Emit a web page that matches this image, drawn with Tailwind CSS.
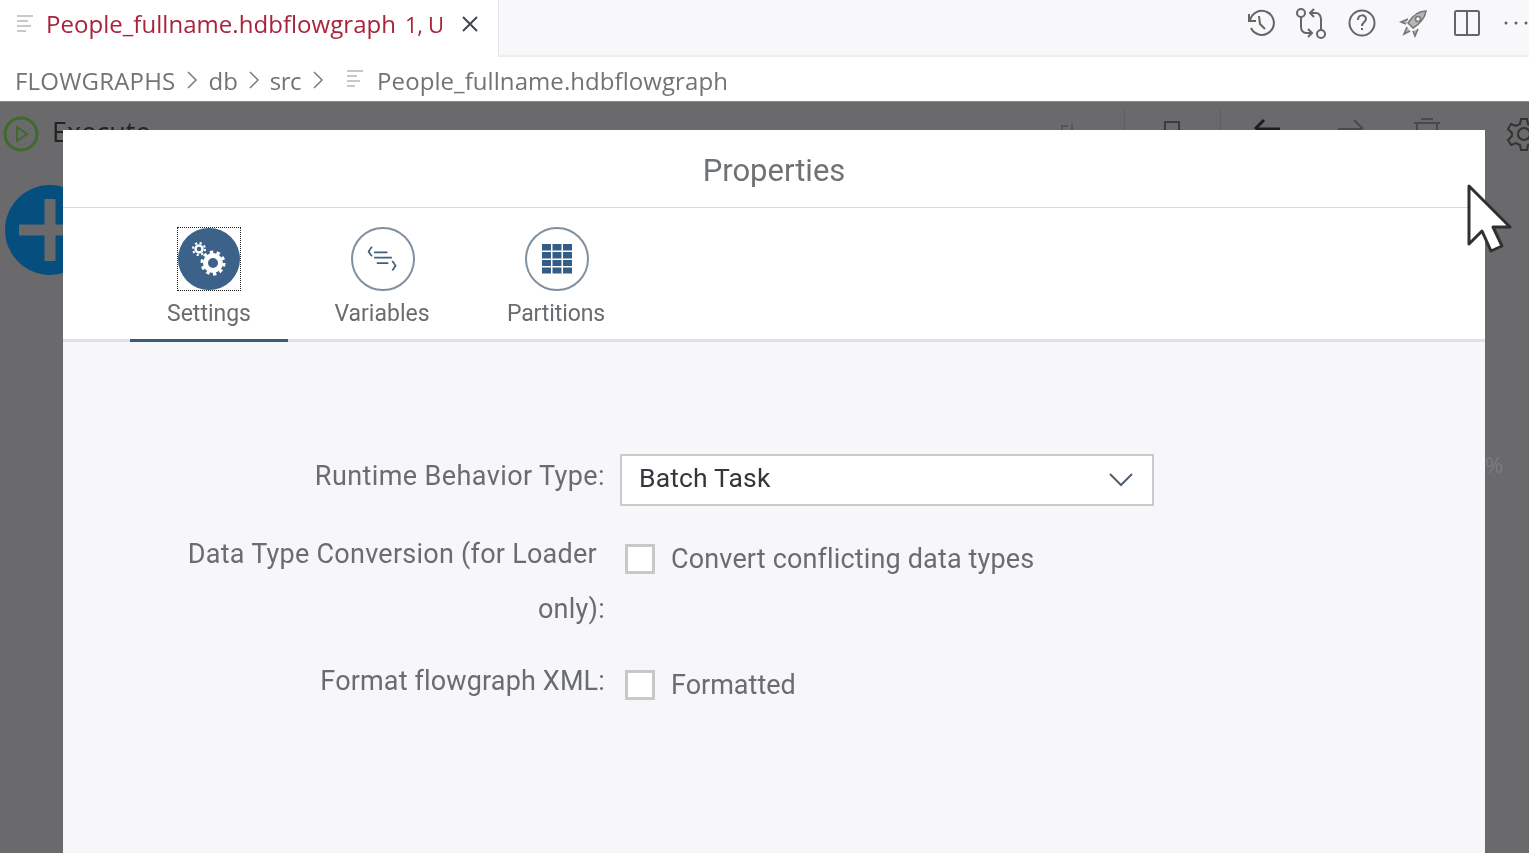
<!DOCTYPE html>
<html>
<head>
<meta charset="utf-8">
<script src="https://cdn.jsdelivr.net/npm/@tailwindcss/browser@4"></script>
</head>
<body class="m-0 overflow-hidden bg-[#6a696b]">
<div class="relative w-[1529px] h-[853px] overflow-hidden flex flex-col font-['Open_Sans',sans-serif] blur-[0.4px]">
  <!-- tab bar -->
  <div class="h-[57px] shrink-0 flex bg-[#f8f7fa] border-b-2 border-[#eeedf0]">
    <div class="w-[499px] h-[57px] bg-white flex items-center border-r border-[#e6e6e9] pb-[10px]">
      <svg class="ml-[16px] w-[18px] h-[20px]" viewBox="0 0 18 20" fill="none" stroke="#c8c8c8" stroke-width="2"><path d="M1 2h16M1 7h11M1 12h14M1 17h9"/></svg>
      <span class="ml-[12px] text-[24px] leading-none text-[#a8243c] tracking-[0.04px] whitespace-nowrap">People_fullname.hdbflowgraph</span>
      <span class="ml-[9px] text-[22px] leading-none text-[#a8243c] whitespace-nowrap tracking-[-0.3px]">1, U</span>
      <svg class="ml-[17px] w-[18px] h-[18px]" viewBox="0 0 18 18" fill="none" stroke="#3d4852" stroke-width="2"><path d="M2 2l14 14M16 2L2 16"/></svg>
    </div>
    <div class="flex-1 relative">
      <svg class="absolute left-[746px] top-[8px] w-[30px] h-[30px]" viewBox="0 0 30 30" fill="none" stroke="#666" stroke-width="2"><path d="M4 6v7h7"/><path d="M5 13a12 12 0 1 1 1 7"/><path d="M14 8l1 8 5 5"/></svg>
      <svg class="absolute left-[797px] top-[8px] w-[30px] h-[32px]" viewBox="0 0 30 32" fill="none" stroke="#666" stroke-width="2"><circle cx="5" cy="5" r="4"/><circle cx="25" cy="26" r="4"/><path d="M5 9v10c0 3 2 6 5 6h5M12 21l4 4-4 4"/><path d="M25 22V11c0-3-2-6-5-6h-5M18 1l-4 4 4 4"/></svg>
      <svg class="absolute left-[849px] top-[9px] w-[28px] h-[28px]" viewBox="0 0 28 28" fill="none" stroke="#666" stroke-width="2"><circle cx="14" cy="14" r="12.5"/><path d="M10 11c0-6 8-6 8-1 0 3-4 3-4 7"/><path d="M14 19v2"/></svg>
      <svg class="absolute left-[900px] top-[9px] w-[29px] h-[29px]" viewBox="0 0 29 29" fill="#b5b5b5" stroke="#777" stroke-width="1.6"><path d="M27 2c-8 0-13 4-18 12l5 5c8-5 12-10 13-17z"/><circle cx="19" cy="10" r="2.5" fill="#fff"/><path d="M9 10l-7 3 5 2M19 20l-3 7-2-5M8 18l-3 7 6-3"/></svg>
      <svg class="absolute left-[955px] top-[10px] w-[26px] h-[26px]" viewBox="0 0 26 26" fill="none" stroke="#666" stroke-width="2"><rect x="1" y="1" width="24" height="24" rx="1.5"/><path d="M13 1v24"/></svg>
      <svg class="absolute left-[1005px] top-[21px] w-[25px] h-[4px]" viewBox="0 0 25 4" fill="#5f5f5f"><circle cx="2" cy="2" r="1.5"/><circle cx="12" cy="2" r="1.5"/><circle cx="22" cy="2" r="1.5"/></svg>
    </div>
  </div>
  <!-- breadcrumb -->
  <div class="h-[44px] shrink-0 bg-white flex items-center text-[24px] text-[#737376] pl-[15px] pt-[4px] whitespace-nowrap">
    <span class="leading-none tracking-[0.2px]">FLOWGRAPHS</span>
    <svg class="ml-[11px] w-[12px] h-[20px] -mt-[3px]" viewBox="0 0 12 20" fill="none" stroke="#7a7a7a" stroke-width="1.5"><path d="M2 2l8 8-8 8"/></svg>
    <span class="ml-[10px] leading-none">db</span>
    <svg class="ml-[10px] w-[12px] h-[20px] -mt-[3px]" viewBox="0 0 12 20" fill="none" stroke="#7a7a7a" stroke-width="1.5"><path d="M2 2l8 8-8 8"/></svg>
    <span class="ml-[10px] leading-none tracking-[-0.5px]">src</span>
    <svg class="ml-[11px] w-[12px] h-[20px] -mt-[3px]" viewBox="0 0 12 20" fill="none" stroke="#7a7a7a" stroke-width="1.5"><path d="M2 2l8 8-8 8"/></svg>
    <svg class="ml-[23px] w-[16px] h-[19px] -mt-[5px]" viewBox="0 0 16 19" fill="none" stroke="#c8c8c8" stroke-width="2"><path d="M0 2h16M0 7h10M0 12h13M0 17h8"/></svg>
    <span class="ml-[14px] leading-none tracking-[0.07px]">People_fullname.hdbflowgraph</span>
  </div>
  <!-- dimmed editor -->
  <div class="flex-1 bg-[#6a696b] border-t border-[#8a8a8a] relative">
    <div class="flex items-center pl-[3px] pt-[14px]">
      <svg class="w-[36px] h-[36px]" viewBox="0 0 36 36" fill="none" stroke="#3f6b2a" stroke-width="3"><circle cx="18" cy="18" r="16"/><path d="M14 11l10 7-10 7z" stroke-width="2"/></svg>
      <span class="ml-[13px] mb-[6px] text-[27px] leading-none text-[#222]">Execute</span>
    </div>
    <div class="absolute left-[5px] top-[83px] w-[90px] h-[90px] rounded-full bg-[#044f7d] flex items-center justify-center">
      <svg class="w-[62px] h-[62px]" viewBox="0 0 62 62" fill="#6a696b"><path d="M25.500 0h11v25.500h25.500v11H36.500v25.500h-11V36.500H0v-11h25.500z"/></svg>
    </div>
    <!-- toolbar icons hidden behind the dialog -->
    <svg class="absolute left-[1058px] top-[20px] w-[24px] h-[10px]" viewBox="0 0 24 10" fill="none" stroke="#565656" stroke-width="2"><path d="M4 10V4h6M14 2v8"/></svg>
    <div class="absolute left-[1124px] top-[8px] w-px h-[22px] bg-[#5e5d5f]"></div>
    <div class="absolute left-[1220px] top-[8px] w-px h-[22px] bg-[#5e5d5f]"></div>
    <svg class="absolute left-[1160px] top-[18px] w-[24px] h-[12px]" viewBox="0 0 24 12" fill="none" stroke="#3c3c3c" stroke-width="2"><rect x="5" y="2" width="14" height="10"/></svg>
    <svg class="absolute left-[1252px] top-[16px] w-[30px] h-[14px]" viewBox="0 0 30 14" fill="none" stroke="#1c1c1c" stroke-width="3"><path d="M28 11H4M12 2L3 11"/></svg>
    <svg class="absolute left-[1336px] top-[16px] w-[30px] h-[14px]" viewBox="0 0 30 14" fill="none" stroke="#4a4a4a" stroke-width="2"><path d="M2 11h24M18 2l9 9"/></svg>
    <svg class="absolute left-[1412px] top-[16px] w-[30px] h-[14px]" viewBox="0 0 30 14" fill="none" stroke="#4a4a4a" stroke-width="2"><path d="M9 1h12M2 5h26M5 5v9M25 5v9"/></svg>
    <svg class="absolute left-[1507px] top-[15px] w-[34px] h-[34px]" viewBox="0 0 34 34" fill="none" stroke="#333" stroke-width="2"><circle cx="17" cy="17" r="6"/><path d="M14 2h6l1 5 4 2 5-2 3 5-4 4v3l4 4-3 5-5-2-4 2-1 5h-6l-1-5-4-2-5 2-3-5 4-4v-3L1 12l3-5 5 2 4-2z"/></svg>
    <span class="absolute left-[1485px] top-[351px] text-[22px] leading-none text-[#7c7c7e]">%</span>
  </div>

  <!-- Properties dialog -->
  <div class="absolute left-[63px] top-[130px] w-[1422px] h-[723px] bg-[#f7f7f9] rounded-t-[2px] flex flex-col">
    <div class="h-[78px] shrink-0 bg-white border-b border-[#d9d9de] flex items-center justify-center pt-[4px]">
      <span class="text-[31px] leading-none text-[#6f7275] font-['Roboto',sans-serif]">Properties</span>
    </div>
    <div class="h-[134px] shrink-0 bg-white border-b-[3px] border-[#dbe0f0] flex pl-[67px] font-['Roboto',sans-serif]">
      <div class="w-[158px] h-[134px] flex flex-col items-center border-b-[3px] border-[#3a5a7f] pt-[19px]">
        <div class="w-[64px] h-[64px] border border-dotted border-[#222] flex items-center justify-center">
          <div class="w-[62px] h-[62px] rounded-full bg-[#3c6289] flex items-center justify-center">
            <svg class="w-[36px] h-[36px]" viewBox="0 0 36 36" fill="none" stroke="#fff"><circle cx="22" cy="22" r="7.500" stroke-width="5"/><circle cx="22" cy="22" r="11" stroke-width="3" stroke-dasharray="3.4 3.5"/><circle cx="8" cy="8" r="3.500" stroke-width="2.500"/><circle cx="8" cy="8" r="6" stroke-width="2" stroke-dasharray="2.200 2.500"/></svg>
          </div>
        </div>
        <span class="mt-[9px] text-[23px] leading-[28px] text-[#6a6d70]">Settings</span>
      </div>
      <div class="w-[174px] flex flex-col items-center pt-[19px] ml-[8px]">
        <div class="w-[64px] h-[64px] rounded-full border-2 border-[#80909f] bg-white flex items-center justify-center">
          <svg class="w-[32px] h-[27px]" viewBox="0 0 36 30" fill="none" stroke="#40607f" stroke-width="2"><path d="M6 1C3 1 4 6 1 6c3 0 2 5 5 5M8 7h15M8 13h20M11 19h13M28 17c3 0 2 5 5 5-3 0-2 5-5 5"/></svg>
        </div>
        <span class="mt-[9px] -ml-[2px] text-[23px] leading-[28px] text-[#6a6d70]">Variables</span>
      </div>
      <div class="w-[174px] flex flex-col items-center pt-[19px]">
        <div class="w-[64px] h-[64px] rounded-full border-2 border-[#80909f] bg-white flex items-center justify-center">
          <svg class="w-[30px] h-[30px]" viewBox="0 0 30 30" fill="#345d85"><rect x="0" y="0" width="9" height="6.500"/><rect x="10.500" y="0" width="9" height="6.500"/><rect x="21" y="0" width="9" height="6.500"/><rect x="0" y="8" width="9" height="6.500"/><rect x="10.500" y="8" width="9" height="6.500"/><rect x="21" y="8" width="9" height="6.500"/><rect x="0" y="16" width="9" height="6"/><rect x="10.500" y="16" width="9" height="6"/><rect x="21" y="16" width="9" height="6"/><rect x="0" y="23.500" width="9" height="6"/><rect x="10.500" y="23.500" width="9" height="6"/><rect x="21" y="23.500" width="9" height="6"/></svg>
        </div>
        <span class="mt-[9px] -ml-[2px] text-[23px] leading-[28px] text-[#6a6d70] tracking-[-0.1px]">Partitions</span>
      </div>
    </div>
    <div class="flex-1 flex flex-col pt-[112px] font-['Roboto',sans-serif] text-[27px] text-[#6a6d70]">
      <div class="flex items-center h-[52px]">
        <div class="w-[542px] text-right pb-[9px] leading-[32px] tracking-[0.4px]">Runtime Behavior Type:</div>
        <div class="ml-[15px] w-[534px] h-[52px] bg-white border-2 border-[#c9cacc] flex items-center justify-between pl-[17px] pr-[18px]">
          <span class="text-[#33363a] text-[26.500px] leading-none tracking-[0.15px] pb-[4px]">Batch Task</span>
          <svg class="w-[26px] h-[16px]" viewBox="0 0 26 16" fill="none" stroke="#506070" stroke-width="2"><path d="M2 2l11 11L24 2"/></svg>
        </div>
      </div>
      <div class="flex items-start mt-[24px]">
        <div class="w-[542px] -mt-[3px] text-right leading-[55px] tracking-[0.25px]"><div class="pr-[8px]">Data Type Conversion (for Loader</div><div>only):</div></div>
        <div class="ml-[20px] flex items-center h-[48px] mt-[5px]">
          <div class="w-[30px] h-[30px] bg-white border-[3px] border-[#c8c8cb]"></div>
          <span class="ml-[16px] leading-none whitespace-nowrap tracking-[0.15px]">Convert conflicting data types</span>
        </div>
      </div>
      <div class="flex items-start mt-[19px]">
        <div class="w-[542px] -mt-[2px] text-right leading-[55px] tracking-[0.15px]">Format flowgraph XML:</div>
        <div class="ml-[20px] flex items-center h-[48px] mt-[5px]">
          <div class="w-[30px] h-[30px] bg-white border-[3px] border-[#c8c8cb]"></div>
          <span class="ml-[16px] leading-none whitespace-nowrap">Formatted</span>
        </div>
      </div>
    </div>
  </div>

  <!-- mouse cursor -->
  <svg class="absolute left-[1466px] top-[183px] w-[46px] h-[72px]" viewBox="0 0 46 72" fill="#fff" stroke="#303030" stroke-width="3" stroke-linejoin="round"><path d="M3 3v58l13-13 9 20 11-5-9-19h17z"/></svg>
</div>
</body>
</html>
